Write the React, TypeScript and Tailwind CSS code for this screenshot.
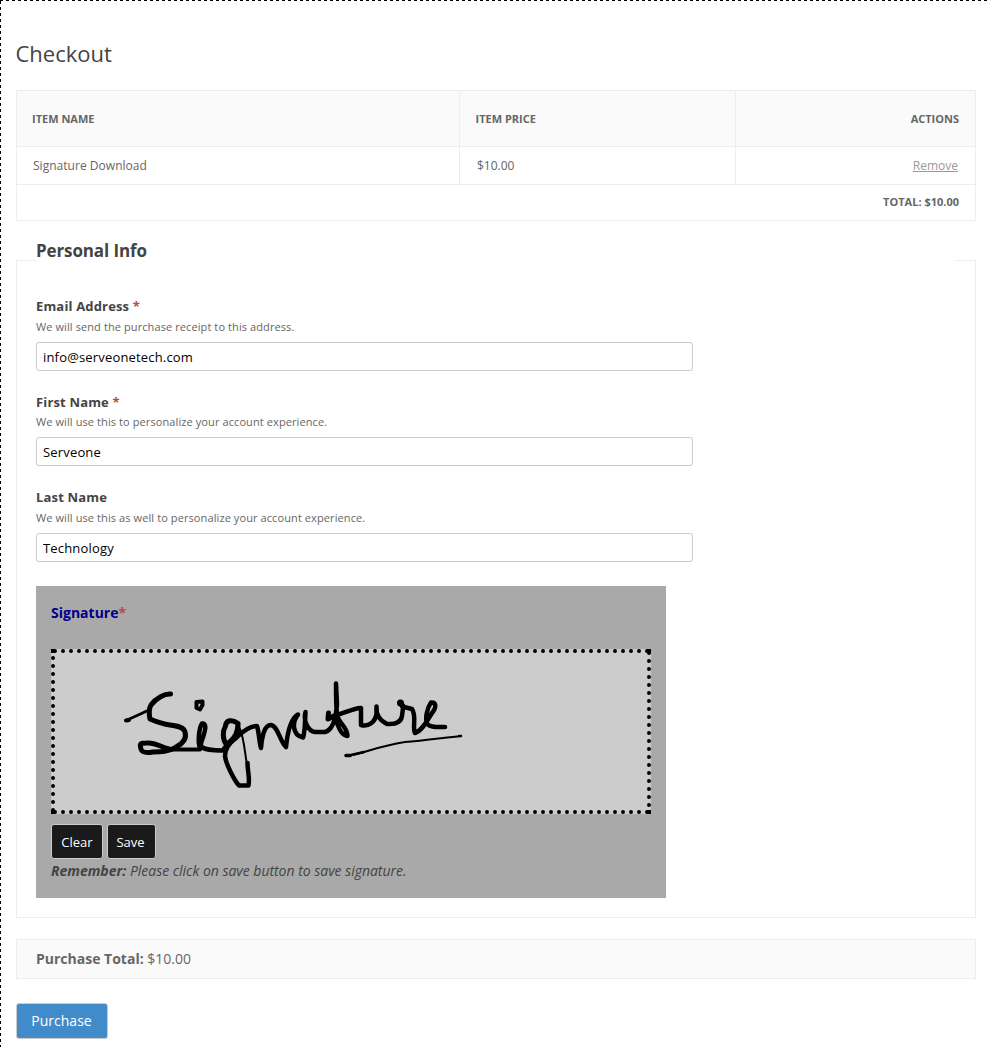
import type { ReactNode } from "react";

type FieldProps = {
  label: string;
  required?: boolean;
  hint: string;
  value: string;
  className: string;
  labelClass?: string;
};

function Field({ label, required, hint, value, className, labelClass = "leading-[21px]" }: FieldProps) {
  return (
    <div className={className}>
      <label className={`block h-[21px] text-[13px] font-bold tracking-[0.16px] text-[#444] ${labelClass}`}>
        {label}
        {required && <span className="text-[#b94a48]"> *</span>}
      </label>
      <p className="h-[20px] text-[11px] leading-[20px] tracking-[0.095px] text-[#666]">{hint}</p>
      <input
        defaultValue={value}
        className="mt-[5px] block h-[29px] w-[657px] rounded-[3px] border border-[#ccc] bg-white px-[6px] text-[13px] tracking-[0.17px] text-black outline-none"
      />
    </div>
  );
}

function PadButton({ children, className }: { children: ReactNode; className: string }) {
  return (
    <button className={`h-[35px] rounded-[3px] border border-[#ccc] bg-[#1a1a1a] pt-[2px] text-[13px] text-white ${className}`}>
      {children}
    </button>
  );
}

function SignatureDrawing() {
  return (
    <svg viewBox="51 649 600 165" className="block h-[165px] w-[600px]" fill="none" stroke="#000" strokeLinecap="round" strokeLinejoin="round">
      <g strokeWidth="4" strokeDasharray="0 8">
        <path d="M55 651H648" />
        <path d="M55 812H648" />
        <path d="M53 658V811" />
        <path d="M649 653V812" />
      </g>
      <path stroke="none" fill="#000" d="M51 649h4v4h-4zM647 649h4v4h-4zM51 810h4v4h-4zM647 810h4v4h-4z" />
      <path strokeWidth="4" d="M126 720.5L129 720" />
      <path strokeWidth="3" d="M126 720.5L136 716L149 710" />
      <path strokeWidth="5" d="M170.500 694C165 693.500 156 698 151 705C148.500 709 149 714 150 719C157 722 162 724 170 725C178 726 184 727 185 732C187 739 182 744 176 747C169 752 160 752 153 752C147 753 142 753 141 749C139 743 141 743 147 743C155 742 160 747 169 749" />
      <path strokeWidth="4" d="M168 749.500L200 749.500" />
      <path strokeWidth="4" d="M196.500 702L202.500 701.500L202.500 705L200 709.500L196.500 708L196.500 702" />
      <path strokeWidth="4.500" d="M200 748C197.500 742 199 728 202 723.500C206.500 723 205.500 729 204.500 732C203 739 200 743 201 746.500C205 750 212 750.500 223 750.500" />
      <path strokeWidth="5" d="M238 723.500C232 719 226 720 225.500 726C222.500 731 222.500 739 226 744C231 742 237 735 238 729L238 723.500C238 732 235 739 228 744.500L224 749" />
      <path strokeWidth="4.500" d="M236 738C228 744 225 749 225 756C226 765 235 781 239 785.500L248.500 785.500C250 778 247.500 771 247.500 763" />
      <path strokeWidth="2" d="M240 729C244 738 245 754 247 765" />
      <path strokeWidth="4.500" d="M236 738C244 730 250 726 257 726C259 732 259 741 261 748C262 737 264 725 271 725C278 726 280 742 286 747C287 737 290 719 298 714.500C292 722 292 735 303 737.500C305 733 305 721 305.500 712C303 721 308 731 315 732L325 732C333 730 336 718 337 704L336 683.500C336 697 336 706 337 715C339 724 347 726 347.500 736C341 736 337 724 335 716" />
      <path strokeWidth="5" d="M328.500 713L328 719L335 716" />
      <path strokeWidth="4.500" d="M333 716C343 714 356 707 361 708L361 725C369 727 375 722 376.500 714L376.500 706.500C376 713 379 720 387 724C395 724.500 401 723 402 716L403 708L400 702L404 707L412 709C417 716 412 728 415 733C422 731 427 721 432 713C437 707 436 702 431 702.500C427 708 425 718 427 724C432 728 437 727 445 727" />
      <circle cx="400.500" cy="703" r="1.500" strokeWidth="4" />
      <path strokeWidth="2" d="M346 756C367 753 374 747 405 742C422 741 442 738 461 736" />
      <path strokeWidth="3.500" d="M346 755.500L350 755.500" />
      <path strokeWidth="2.500" d="M349 755.500L364 752M459 736L461 736" />
    </svg>
  );
}

export default function App() {
  return (
    <main className="min-h-[1047px] w-[987px] bg-[image:repeating-linear-gradient(90deg,#000_0_3px,transparent_3px_6px),repeating-linear-gradient(180deg,transparent_0_1px,#000_1px_4px,transparent_4px_6px)] bg-[length:100%_1px,1px_100%] bg-no-repeat pt-px pl-[16px] font-['Open_Sans','Noto_Sans',sans-serif] text-[#444]">
      <h1 className="-ml-[0.5px] pt-[36px] text-[22px] leading-[32px]">Checkout</h1>
      <div className="mt-[21px] w-[960px] border border-[#ededed] text-[#666]">
        <div className="grid h-[56px] grid-cols-[443px_276px_239px] border-b border-[#ededed] bg-[#fafafa] text-[11px] leading-[55px] font-bold">
          <div className="border-r border-[#ededed] pl-[15px]">ITEM NAME</div>
          <div className="border-r border-[#ededed] pl-[15.500px]">ITEM PRICE</div>
          <div className="pr-[16px] text-right">ACTIONS</div>
        </div>
        <div className="grid h-[38px] grid-cols-[443px_276px_239px] border-b border-[#ededed] text-[12px] leading-[37px]">
          <div className="border-r border-[#ededed] pl-[16px] tracking-[0.03px]">Signature Download</div>
          <div className="border-r border-[#ededed] pl-[17px]">$10.00</div>
          <div className="pr-[17px] text-right"><a className="text-[#999] underline">Remove</a></div>
        </div>
        <div className="h-[35px] pr-[16px] text-right text-[11px] leading-[34px] font-bold">TOTAL: $10.00</div>
      </div>

      <fieldset className="mt-[16px] h-[681px] w-[960px] border border-[#ededed] px-[19px]">
        <legend className="block h-[46px] w-full pt-[1px] text-[17px] leading-[26px] font-bold tracking-[-0.12px]">Personal Info</legend>
        <div className="mt-[13px]">
          <Field className="h-[95px]" label="Email Address" required hint="We will send the purchase receipt to this address." value="info@serveonetech.com" />
          <Field className="h-[96px]" labelClass="leading-[23px]" label="First Name" required hint="We will use this to personalize your account experience." value="Serveone" />
          <Field className="h-[99px]" label="Last Name" hint="We will use this as well to personalize your account experience." value="Technology" />
        </div>
        <section className="h-[312px] w-[630px] bg-[#a9a9a9] px-[15px]">
          <div className="h-[63px] pt-[16px] text-[14px] leading-[22px] font-bold text-[#00008b]">
            Signature<span className="text-[#b94a48]">*</span>
          </div>
          <div className="h-[165px] w-[600px] bg-[#ccc]">
            <SignatureDrawing />
          </div>
          <div className="flex gap-[4px] pt-[10px]">
            <PadButton className="w-[52px]">Clear</PadButton>
            <PadButton className="w-[49px] pr-[2px]">Save</PadButton>
          </div>
          <p className="text-[14px] leading-[24px] tracking-[-0.02px] italic"><b>Remember:</b> Please click on save button to save signature.</p>
        </section>
      </fieldset>

      <div className="mt-[21px] h-[40px] w-[960px] border border-[#ededed] bg-[#fafafa] pl-[19px] text-[14px] leading-[38px] text-[#666]">
        <b>Purchase Total:</b> $10.00
      </div>
      <button className="mt-[24px] block h-[36px] w-[92px] rounded-[3px] border border-[#ccc] bg-[#428bca] pr-[1px] pb-[2px] text-[14px] text-white">Purchase</button>
    </main>
  );
}
